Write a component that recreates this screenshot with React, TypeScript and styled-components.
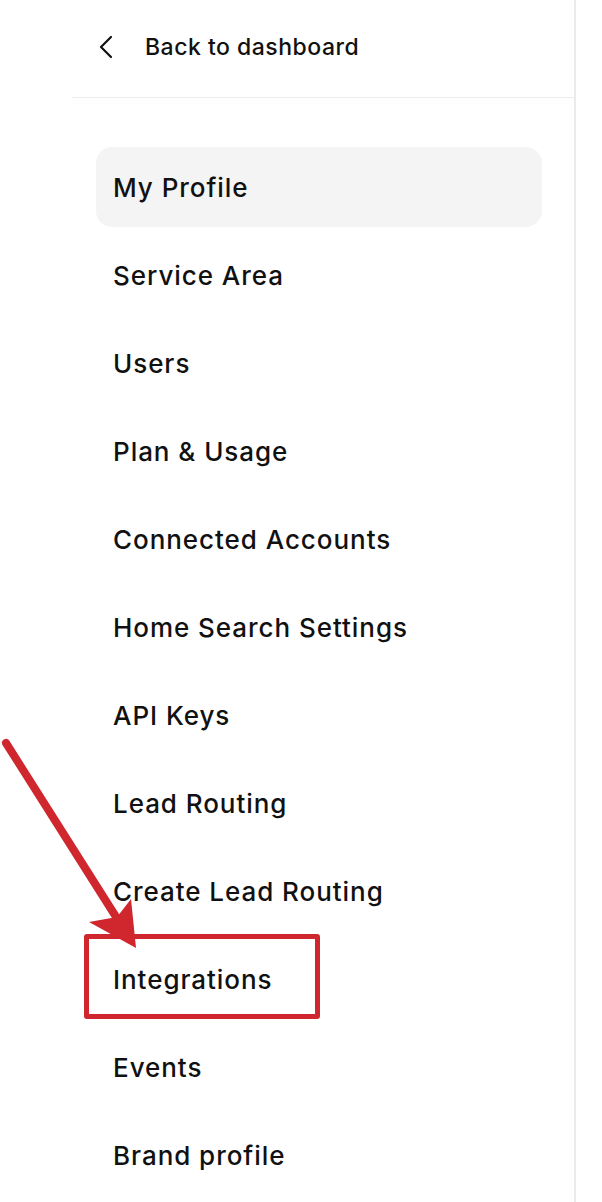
import React from "react";
import styled, { createGlobalStyle } from "styled-components";

const Global = createGlobalStyle`
  html, body { margin: 0; padding: 0; background: #fff; }
  body { font-family: Inter, "Noto Sans", sans-serif; color: #111; }
`;

const Page = styled.div`
  position: relative;
  width: 602px;
  height: 1202px;
  overflow: hidden;
  padding-left: 72px;
  box-sizing: border-box;
`;

const Sidebar = styled.aside`
  width: 504px;
  height: 100%;
  border-right: 2px solid #ebebeb;
  box-sizing: border-box;
  display: flex;
  flex-direction: column;
`;

const BackRow = styled.a`
  height: 98px;
  border-bottom: 1px solid #ececec;
  box-sizing: border-box;
  display: flex;
  align-items: center;
  gap: 29px;
  padding-left: 24px;
  padding-bottom: 4px;
  color: #111;
  text-decoration: none;
  font-size: 23px;
  font-weight: 500;
  letter-spacing: 0.5px;
`;

const Nav = styled.nav`
  display: flex;
  flex-direction: column;
  gap: 8px;
  padding: 49px 32px 0 24px;
`;

const Item = styled.div<{ $active?: boolean }>`
  height: 80px;
  display: flex;
  align-items: center;
  padding-left: 17px;
  border-radius: 16px;
  background: ${(p) => (p.$active ? "#f4f4f4" : "transparent")};
  font-size: 26px;
  font-weight: 500;
  color: #111;
  letter-spacing: 0.95px;
`;

const Highlight = styled.div`
  position: absolute;
  left: 84px;
  top: 934px;
  width: 236px;
  height: 85px;
  border: 5px solid #d0262e;
  border-radius: 3px;
  box-sizing: border-box;
`;

const ArrowSvg = styled.svg`
  position: absolute;
  left: 0;
  top: 0;
  pointer-events: none;
`;

const items = [
  "My Profile",
  "Service Area",
  "Users",
  "Plan & Usage",
  "Connected Accounts",
  "Home Search Settings",
  "API Keys",
  "Lead Routing",
  "Create Lead Routing",
  "Integrations",
  "Events",
  "Brand profile",
];

export default function App() {
  return (
    <>
      <Global />
      <Page>
        <Sidebar>
          <BackRow href="#">
            <svg width="20" height="26" viewBox="0 0 20 26" fill="none">
              <path d="M15 3 L5 13 L15 23" stroke="#111" strokeWidth="2.2" strokeLinecap="round" strokeLinejoin="round" />
            </svg>
            Back to dashboard
          </BackRow>
          <Nav>
            {items.map((t, i) => (
              <Item key={t} $active={i === 0}>
                {t}
              </Item>
            ))}
          </Nav>
        </Sidebar>
        <Highlight />
        <ArrowSvg width="602" height="1202" viewBox="0 0 602 1202">
          <line x1="6" y1="743" x2="118" y2="920" stroke="#d0262e" strokeWidth="8" strokeLinecap="round" />
          <polygon points="136,948 89,922 117,917 131,899" fill="#d0262e" />
        </ArrowSvg>
      </Page>
    </>
  );
}
